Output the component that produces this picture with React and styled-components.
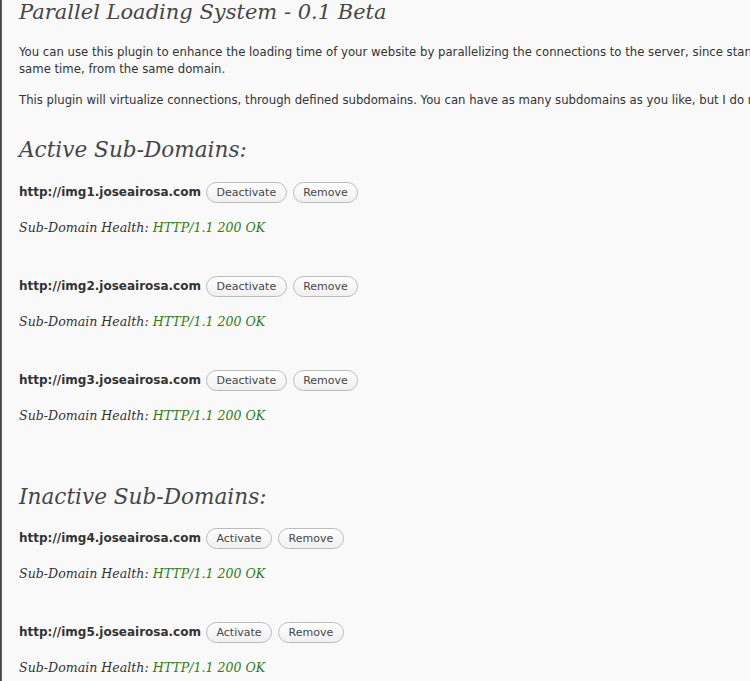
import React from 'react'
import styled, { createGlobalStyle } from 'styled-components'

const Global = createGlobalStyle`
  html, body {
    margin: 0;
    padding: 0;
    background: #f9f9f9;
    overflow: hidden;
  }
`

const Page = styled.div`
  display: flex;
  min-height: 681px;
`

const Edge = styled.div`
  width: 2px;
  flex-shrink: 0;
  background: linear-gradient(to right, #3a3a3a, #6a6a6a);
`

const Wrap = styled.div`
  width: 1100px;
  flex-shrink: 0;
  padding: 0 0 0 17px;
  font-family: 'DejaVu Sans', sans-serif;
  font-size: 12px;
  color: #333;
`

const Title = styled.h2`
  margin: 0;
  padding: 0;
  font-family: 'DejaVu Serif', Georgia, serif;
  font-style: italic;
  font-weight: normal;
  font-size: 21px;
  line-height: 24px;
  color: #464646;
`

const Text = styled.p`
  margin: ${p => p.first ? '20px' : '14px'} 0 0;
  font-size: 11.7px;
  line-height: 17px;
  white-space: nowrap;
`

const Section = styled.h3`
  margin: ${p => p.top}px 0 0;
  font-family: 'DejaVu Serif', Georgia, serif;
  font-style: italic;
  font-weight: normal;
  font-size: 21.6px;
  line-height: 28px;
  color: #464646;
`

const Row = styled.div`
  display: flex;
  align-items: center;
  gap: 6px;
  margin-top: ${p => p.top}px;
  height: 22px;
`

const Domain = styled.strong`
  font-size: 12px;
  font-weight: bold;
  color: #333;
  margin-right: -1px;
`

const Button = styled.button`
  height: 21px;
  padding: 0 9.5px;
  border: 1px solid #bbb;
  border-radius: 11px;
  background: linear-gradient(to bottom, #fefefe, #f0f0f0);
  font-family: 'DejaVu Sans', sans-serif;
  font-size: 11px;
  color: #464646;
  cursor: pointer;
`

const Health = styled.p`
  margin: 16px 0 0;
  font-family: 'DejaVu Serif', Georgia, serif;
  font-style: italic;
  font-size: 12.6px;
  line-height: 18px;
  color: #333;
`

const Ok = styled.span`
  color: #2e7d18;
`

const SubDomain = ({ url, active, top }) => (
  <>
    <Row top={top}>
      <Domain>{url}</Domain>
      <Button>{active ? 'Deactivate' : 'Activate'}</Button>
      <Button>Remove</Button>
    </Row>
    <Health>Sub-Domain Health: <Ok>HTTP/1.1 200 OK</Ok></Health>
  </>
)

const App = () => (
  <Page>
    <Global />
    <Edge />
    <Wrap>
      <Title>Parallel Loading System - 0.1 Beta</Title>
      <Text first>
        You can use this plugin to enhance the loading time of your website by parallelizing the connections to the server, since standard browsers only allow a limited number of connections at the
        <br />same time, from the same domain.
      </Text>
      <Text>
        This plugin will virtualize connections, through defined subdomains. You can have as many subdomains as you like, but I do not recommend more than four.
      </Text>
      <Section top={27}>Active Sub-Domains:</Section>
      <SubDomain url="http://img1.joseairosa.com" active top={17} />
      <SubDomain url="http://img2.joseairosa.com" active top={38} />
      <SubDomain url="http://img3.joseairosa.com" active top={38} />
      <Section top={58}>Inactive Sub-Domains:</Section>
      <SubDomain url="http://img4.joseairosa.com" top={16} />
      <SubDomain url="http://img5.joseairosa.com" top={38} />
    </Wrap>
  </Page>
)

export default App
